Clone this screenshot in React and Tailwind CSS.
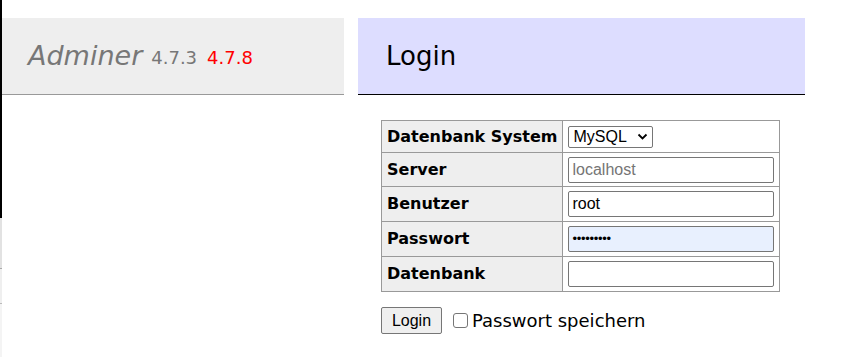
import { useState } from 'react';

const rows = [
  { label: 'Datenbank System', h: 'h-[32px]', kind: 'select' },
  { label: 'Server', h: 'h-[34px]', kind: 'text', placeholder: 'localhost' },
  { label: 'Benutzer', h: 'h-[35px]', kind: 'text', value: 'root' },
  { label: 'Passwort', h: 'h-[35px]', kind: 'password', value: '•••••••••' },
  { label: 'Datenbank', h: 'h-[35px]', kind: 'text', value: '' },
];

function Field({ row }) {
  if (row.kind === 'select') {
    return (
      <div className="flex h-[22px] w-[85px] items-center justify-between rounded-[2px] border border-[#767676] bg-white pl-[4px] pr-[4px] font-['Liberation_Sans',Arial,sans-serif] text-[16px] text-black">
        <span>MySQL</span>
        <svg width="11" height="8" viewBox="0 0 11 8" fill="none">
          <path d="M1.5 1.5 L5.5 5.5 L9.5 1.5" stroke="#000" strokeWidth="1.8" />
        </svg>
      </div>
    );
  }
  const bg = row.kind === 'password' ? 'bg-[#e8f0fe]' : 'bg-white';
  return (
    <div className={`flex h-[26px] w-[206px] items-center rounded-[2px] border border-[#767676] ${bg} px-[3px] font-['Liberation_Sans',Arial,sans-serif] text-[16px]`}>
      {row.placeholder && <span className="text-[#757575]">{row.placeholder}</span>}
      {row.kind === 'password' && <span className="text-[13px] tracking-[-0.3px] text-black">{row.value}</span>}
      {row.kind === 'text' && row.value && <span className="text-black">{row.value}</span>}
    </div>
  );
}

export default function App() {
  const [remember] = useState(false);

  return (
    <div className="flex h-[357px] w-[842px] overflow-hidden bg-white font-['DejaVu_Sans',Verdana,sans-serif] text-black">
      {/* window edge */}
      <div className="flex w-[2px] flex-col">
        <div className="h-[218px] bg-black" />
        <div className="h-[50px] bg-[#e2e2e2]" />
        <div className="h-[1px] bg-[#aaa]" />
        <div className="h-[34px] bg-[#efefef]" />
        <div className="h-[1px] bg-[#bbb]" />
        <div className="flex-1 bg-[#f4f4f4]" />
      </div>

      {/* menu */}
      <div className="w-[342px] pt-[18px]">
        <div className="flex h-[77px] items-center border-b border-[#999] bg-[#eee] pl-[26px]">
          <span className="text-[27px] italic text-[#777]">Adminer</span>
          <span className="ml-[9px] mt-[3px] text-[18px] text-[#777]">4.7.3</span>
          <span className="ml-[10px] mt-[3px] text-[18px] text-[#f00]">4.7.8</span>
        </div>
      </div>

      {/* content */}
      <div className="ml-[14px] w-[447px] pt-[18px]">
        <div className="flex h-[77px] items-center border-b border-black bg-[#ddf] pl-[28px]">
          <h2 className="text-[26px] font-normal">Login</h2>
        </div>

        <div className="ml-[23px] mt-[25px]">
          <table className="border-collapse">
            <tbody>
              {rows.map((row) => (
                <tr key={row.label} className={row.h}>
                  <th className="w-[181px] whitespace-nowrap border border-[#999] bg-[#eee] px-[5px] text-left align-middle text-[16px] font-bold">
                    {row.label}
                  </th>
                  <td className="w-[217px] border border-[#999] px-[5px] align-middle">
                    <Field row={row} />
                  </td>
                </tr>
              ))}
            </tbody>
          </table>

          <div className="mt-[15px] flex items-center">
            <button className="h-[27px] w-[61px] rounded-[2px] border border-[#767676] bg-[#efefef] font-['Liberation_Sans',Arial,sans-serif] text-[16px] text-black">
              Login
            </button>
            <label className="ml-[11px] flex items-center text-[18px]">
              <span className="flex h-[15px] w-[15px] items-center justify-center rounded-[3px] border border-[#767676] bg-white">
                {remember && '✓'}
              </span>
              <span className="ml-[4px]">Passwort speichern</span>
            </label>
          </div>
        </div>
      </div>
    </div>
  );
}
